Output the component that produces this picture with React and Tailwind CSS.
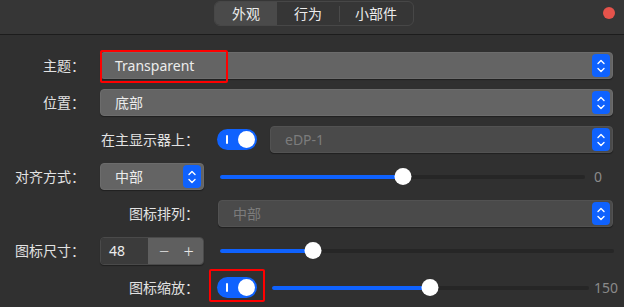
import { useState } from 'react';

const FONT = { fontFamily: '"Noto Sans", "Noto Sans CJK SC", sans-serif' };

const Stepper = () => (
  <div className="w-[18px] h-[23px] rounded-[4px] bg-[#0f62fe] flex items-center justify-center shrink-0">
    <svg width="10" height="16" viewBox="0 0 10 16" fill="none" stroke="#fff" strokeWidth="1.4" strokeLinecap="round" strokeLinejoin="round">
      <path d="M2 5.5 L5 2.5 L8 5.5" />
      <path d="M2 10.5 L5 13.5 L8 10.5" />
    </svg>
  </div>
);

const Select = ({ value, disabled, className = '', children }) => (
  <div
    className={`relative h-[27px] rounded-[4px] flex items-center pl-[14px] pr-[2px] border ${disabled ? 'bg-[#4a4a4a] border-[#525252] text-[#7c7c7c]' : 'bg-[#646464] border-[#6c6c6c] text-[#ececec]'} shadow-[0_1px_1px_rgba(0,0,0,0.35)] ${className}`}
  >
    <span className="flex-1 text-[14px] leading-none">{value}</span>
    <Stepper />
    {children}
  </div>
);

const Toggle = ({ children }) => (
  <div className="relative w-[40px] h-[21px] rounded-full bg-[#0f62fe] flex items-center justify-between pl-[9px] pr-[2px] shrink-0">
    <div className="w-[2px] h-[9px] bg-white rounded-sm" />
    <div className="w-[17px] h-[17px] rounded-full bg-white" />
    {children}
  </div>
);

const Slider = ({ pct, className = '' }) => (
  <div className={`relative h-[16px] flex items-center ${className}`}>
    <div className="w-full h-[4px] rounded-full bg-[#262626] overflow-hidden">
      <div className="h-full bg-[#0f62fe]" style={{ width: `${pct}%` }} />
    </div>
    <div
      className="absolute w-[17px] h-[17px] rounded-full bg-white -translate-x-1/2"
      style={{ left: `${pct}%` }}
    />
  </div>
);

const Label = ({ children, className = '' }) => (
  <div className={`text-right text-[14px] text-[#e2e2e2] shrink-0 leading-none ${className}`}>{children}</div>
);

const Row = ({ label, children }) => (
  <div className="flex items-center h-[37px]">
    <Label className="w-[85px]">{label}</Label>
    <div className="ml-[15px] flex-1 flex items-center">{children}</div>
  </div>
);

export default function App() {
  const [tab] = useState('外观');
  const tabs = ['外观', '行为', '小部件'];

  return (
    <div className="w-[624px] h-[307px] bg-[#303030] overflow-hidden" style={FONT}>
      <div className="relative h-[35px] bg-[#363636] border-b border-[#1c1c1c] flex justify-center pt-[1px]">
        <div className="flex h-[25px] ml-[4px] rounded-[6px] border border-[#474747]">
          {tabs.map((t, i) => (
            <div
              key={t}
              className={`relative flex items-center justify-center text-[14px] text-[#ececec] ${t === tab ? 'w-[62px] bg-[#4a4a4a] rounded-l-[5px]' : i === 1 ? 'w-[62px]' : 'w-[74px]'}`}
            >
              {t}
              {i === 2 && <div className="absolute left-0 top-[4px] w-px h-[16px] bg-[#4a4a4a]" />}
            </div>
          ))}
        </div>
        <div className="absolute right-[9px] top-[7px] w-[12px] h-[12px] rounded-full bg-[#e5534b]" />
      </div>

      <div className="pt-[12px] pr-[11px]">
        <Row label="主题：">
          <Select value="Transparent" className="flex-1">
            <div className="absolute -left-[1px] -top-[3px] w-[128px] h-[33px] border-2 border-[#ff0000] rounded-[2px]" />
          </Select>
        </Row>
        <Row label="位置：">
          <Select value="底部" className="flex-1" />
        </Row>
        <Row label="">
          <Label className="w-[99px]">在主显示器上：</Label>
          <div className="ml-[18px]"><Toggle /></div>
          <Select value="eDP-1" disabled className="flex-1 ml-[13px]" />
        </Row>
        <Row label="对齐方式：">
          <Select value="中部" className="w-[104px]" />
          <Slider pct={50} className="flex-1 ml-[16px]" />
          <div className="w-[28px] pl-[9px] text-[14px] text-[#8a8a8a] leading-none">0</div>
        </Row>
        <Row label="">
          <Label className="w-[99px]">图标排列：</Label>
          <Select value="中部" disabled className="flex-1 ml-[19px]" />
        </Row>
        <Row label="图标尺寸：">
          <div className="flex w-[104px] h-[28px] rounded-[4px] overflow-hidden border border-[#4a4a4a] shadow-[0_1px_1px_rgba(0,0,0,0.35)]">
            <div className="w-[47px] bg-[#3b3b3b] flex items-center pl-[8px] text-[14px] text-[#ececec] leading-none">48</div>
            <div className="flex-1 bg-[#5f5f5f] flex items-center justify-around pl-[4px] pr-[2px] text-[18px] font-light text-[#e6e6e6] leading-none">
              <span>−</span>
              <span>+</span>
            </div>
          </div>
          <Slider pct={23.5} className="flex-1 ml-[16px] mr-[-1px]" />
        </Row>
        <Row label="">
          <Label className="w-[99px]">图标缩放：</Label>
          <div className="ml-[18px]">
            <Toggle>
              <div className="absolute -left-[8px] -top-[8px] w-[56px] h-[33px] border-2 border-[#ff0000] rounded-[2px]" />
            </Toggle>
          </div>
          <Slider pct={49.8} className="flex-1 ml-[15px]" />
          <div className="w-[24px] pl-[5px] text-[14px] text-[#8a8a8a] leading-none whitespace-nowrap">150</div>
        </Row>
      </div>
    </div>
  );
}
